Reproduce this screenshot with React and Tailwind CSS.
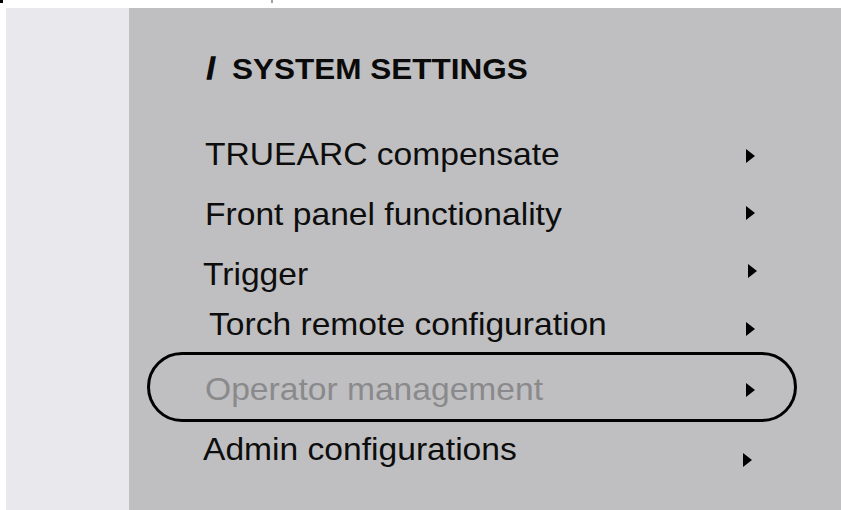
const rows = [
  { label: 'TRUEARC compensate', row: 'h-[60px]', text: 'ml-0', arrow: 'mt-[11px] mr-0' },
  { label: 'Front panel functionality', row: 'h-[60px]', text: 'ml-0', arrow: 'mt-[8px] mr-0' },
  { label: 'Trigger', row: 'h-[50px]', text: '-ml-[2px]', arrow: 'mt-[6px] -mr-[2px]' },
  { label: 'Torch remote configuration', row: 'h-[44px]', text: 'ml-[4px]', arrow: 'mt-[14px] mr-0' },
];

function Arrow({ className }) {
  return (
    <svg width="9" height="14" viewBox="0 0 9 14" className={`shrink-0 ml-auto ${className}`}>
      <polygon points="0,0 9,7 0,14" fill="#000" />
    </svg>
  );
}

export default function App() {
  return (
    <div className="w-[841px] h-[510px] bg-white flex flex-col overflow-hidden" style={{ fontFamily: '"Liberation Sans", Arial, sans-serif' }}>
      {/* top strip with cut-off marks */}
      <div className="h-[8px] flex items-start shrink-0">
        <div className="w-[3px] h-[3px] bg-black" />
        <div className="w-[2px] h-[3px] bg-gray-400 ml-[268px]" />
      </div>

      <div className="flex flex-1 pl-[6px]">
        <div className="w-[123px] bg-[#e9e9ed]" />

        <div className="flex-1 bg-[#bfbfc1] pl-[76px] pt-[46px]">
          <h1 className="flex items-baseline text-[30px] leading-none font-bold text-[#0a0a0a] whitespace-nowrap">
            <span className="ml-[2px] w-[25px] [-webkit-text-stroke:1.4px_#0a0a0a]">/</span>
            <span className="origin-left scale-x-[1.05]">SYSTEM SETTINGS</span>
          </h1>

          <div className="mt-[54px] flex flex-col">
            {rows.map(r => (
              <div key={r.label} className={`w-[550px] flex items-start ${r.row}`}>
                <span className={`text-[32px] leading-none text-[#0d0d0d] whitespace-nowrap origin-left scale-x-[1.05] ${r.text}`}>{r.label}</span>
                <Arrow className={r.arrow} />
              </div>
            ))}

            {/* selected row */}
            <div className="-ml-[58px] w-[650px] h-[70px] flex items-start border-[3px] border-black rounded-full pl-[55px] pr-[39px]">
              <span className="mt-[18px] text-[32px] leading-none text-[#8a8a8c] whitespace-nowrap origin-left scale-x-[1.05]">Operator management</span>
              <Arrow className="mt-[28px]" />
            </div>

            <div className="w-[550px] h-[60px] flex items-start mt-[11px]">
              <span className="-ml-[2px] text-[32px] leading-none text-[#0d0d0d] whitespace-nowrap origin-left scale-x-[1.05]">Admin configurations</span>
              <Arrow className="mt-[20px] mr-[3px]" />
            </div>
          </div>
        </div>
      </div>
    </div>
  );
}
